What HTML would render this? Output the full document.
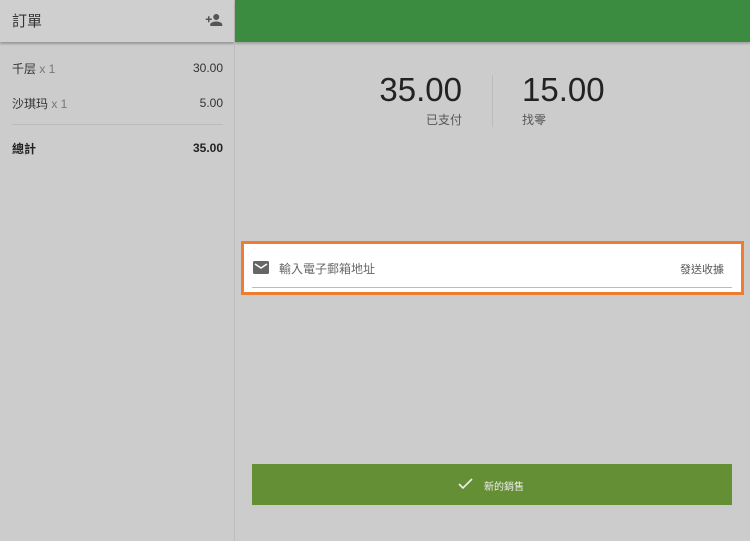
<!DOCTYPE html>
<html><head><meta charset="utf-8"><style>
*{margin:0;padding:0;box-sizing:border-box}
body{width:750px;height:541px;background:#cccccc;font-family:"Liberation Sans","Noto Sans CJK TC",sans-serif;position:relative;overflow:hidden;color:#222}
.abs{position:absolute}
</style></head><body>
<div class="abs" style="left:0;top:0;width:234px;height:42px;background:#cfcfcf;box-shadow:0 2px 2px rgba(0,0,0,.25)"></div>
<div class="abs" style="left:12px;top:10px;font-size:15px;color:#333">訂單</div>
<svg class="abs" style="left:204px;top:11px" width="20" height="18" viewBox="0 0 24 24"><path fill="#555" d="M15 12c2.2 0 4-1.8 4-4s-1.8-4-4-4-4 1.8-4 4 1.8 4 4 4zm-9-2V7H4v3H1v2h3v3h2v-3h3v-2H6zm9 4c-2.7 0-8 1.3-8 4v2h16v-2c0-2.7-5.3-4-8-4z"/></svg>
<div class="abs" style="left:234px;top:0;width:1px;height:541px;background:#bdbdbd"></div>
<div class="abs" style="left:235px;top:0;width:515px;height:42px;background:#3b8c40;box-shadow:0 2px 2px rgba(0,0,0,.2)"></div>
<div class="abs" style="left:12px;top:60px;font-size:12px;color:#333">千层 <span style="color:#777">x 1</span></div>
<div class="abs" style="right:527px;top:61px;font-size:12px;color:#333">30.00</div>
<div class="abs" style="left:12px;top:95px;font-size:12px;color:#333">沙琪玛 <span style="color:#777">x 1</span></div>
<div class="abs" style="right:527px;top:96px;font-size:12px;color:#333">5.00</div>
<div class="abs" style="left:12px;top:124px;width:211px;height:1px;background:#bbb"></div>
<div class="abs" style="left:12px;top:140px;font-size:12px;font-weight:bold;color:#222">總計</div>
<div class="abs" style="right:527px;top:141px;font-size:12px;font-weight:bold;color:#222">35.00</div>
<div class="abs" style="right:288px;top:71px;font-size:33px;color:#222">35.00</div>
<div class="abs" style="right:288px;top:111px;font-size:12px;color:#555">已支付</div>
<div class="abs" style="left:492px;top:75px;width:1px;height:52px;background:#bbb"></div>
<div class="abs" style="left:522px;top:71px;font-size:33px;color:#222">15.00</div>
<div class="abs" style="left:522px;top:111px;font-size:12px;color:#555">找零</div>
<div class="abs" style="left:241px;top:241px;width:503px;height:54px;background:#fff;border:3px solid #ee7d2f"></div>
<svg class="abs" style="left:253px;top:261px" width="16" height="13" viewBox="0 0 16 13"><rect width="16" height="13" rx="1.5" fill="#666"/><path d="M2 3l6 4 6-4" stroke="#fff" stroke-width="1.4" fill="none"/></svg>
<div class="abs" style="left:279px;top:260px;font-size:12px;color:#666">輸入電子郵箱地址</div>
<div class="abs" style="left:680px;top:261px;font-size:11px;color:#555">發送收據</div>
<div class="abs" style="left:252px;top:287px;width:480px;height:1px;background:#bbb"></div>
<div class="abs" style="left:252px;top:464px;width:480px;height:41px;background:#658f35"></div>
<svg class="abs" style="left:458px;top:478px" width="15" height="12" viewBox="0 0 15 12"><path d="M1 6l4 4 9-9" stroke="#eee" stroke-width="1.6" fill="none"/></svg>
<div class="abs" style="left:484px;top:478px;font-size:10px;color:#eee">新的銷售</div>
</body></html>
